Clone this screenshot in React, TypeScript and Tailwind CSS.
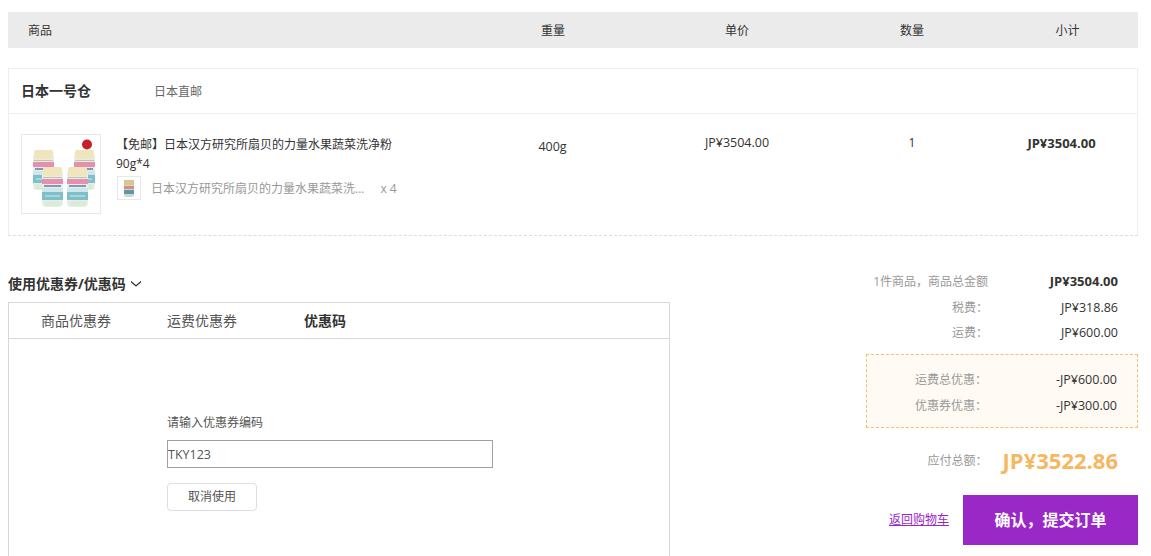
const FONT = "font-['Open_Sans','Noto_Sans_CJK_SC',sans-serif]";

// one bottle of the product shot, 21x40 in image units
function Bottle({ x, y }: { x: number; y: number }) {
  return (
    <g transform={`translate(${x} ${y})`}>
      <rect x="0" y="3" width="21" height="37" rx="4" fill="#e6eeea" />
      <rect x="1" y="0" width="19" height="9" rx="2" fill="#efe6bd" />
      <rect x="1" y="10" width="19" height="1" fill="#b9c7a8" />
      <rect x="0" y="12" width="21" height="5" fill="#e88fb0" />
      <rect x="2" y="18" width="17" height="2" fill="#8796b4" />
      <rect x="0" y="21" width="21" height="4" fill="#cfe6ea" />
      <rect x="0" y="25" width="21" height="8" fill="#7fbfcc" />
      <rect x="3" y="28" width="15" height="2" fill="#a8d8d4" />
      <rect x="2" y="34" width="17" height="5" rx="2" fill="#dcebd6" />
    </g>
  );
}

function ProductImage() {
  return (
    <svg viewBox="0 0 78 78" className="h-full w-full">
      <rect width="78" height="78" fill="#fff" />
      <Bottle x={11} y={15} />
      <Bottle x={52} y={15} />
      <Bottle x={20} y={32} />
      <Bottle x={45} y={32} />
      <circle cx="65" cy="9.5" r="5" fill="#c8202a" />
    </svg>
  );
}

function BundleThumb() {
  return (
    <svg viewBox="0 0 22 22" className="h-full w-full">
      <rect width="22" height="22" fill="#fff" />
      <rect x="6" y="3" width="10" height="17" rx="2" fill="#cfd8cc" />
      <rect x="6" y="3" width="10" height="5" fill="#d9c88e" />
      <rect x="6" y="9" width="10" height="3" fill="#d98a8a" />
      <rect x="6" y="13" width="10" height="4" fill="#5a9aa8" />
    </svg>
  );
}

function SummaryRow({
  label,
  value,
  bold,
  className,
}: {
  label: string;
  value: string;
  bold?: boolean;
  className: string;
}) {
  return (
    <div className={`flex items-center justify-end text-xs ${className}`}>
      <span className="text-[#999]">{label}</span>
      <span
        className={`w-[130px] text-right text-[#333] ${bold ? "text-[13px] font-bold" : "text-[12.5px]"}`}
      >
        {value}
      </span>
    </div>
  );
}

export default function App() {
  return (
    <div
      className={`${FONT} h-[556px] w-[1151px] overflow-hidden bg-white pl-2 pt-3 text-xs text-[#333]`}
    >
      {/* Table head */}
      <div className="grid h-9 w-[1130px] grid-cols-[457px_176px_192px_158px_147px] items-center bg-[#ebebeb] pt-[2px] text-center">
        <span className="pl-5 text-left">商品</span>
        <span>重量</span>
        <span>单价</span>
        <span>数量</span>
        <span className="pl-[6px]">小计</span>
      </div>

      {/* Warehouse card */}
      <div className="mt-5 h-[168px] w-[1130px] border border-[#eee] border-b-[#ddd] [border-bottom-style:dashed]">
        <div className="flex h-[45px] items-center border-b border-[#eee] pl-3">
          <span className="w-[133px] text-sm font-bold">日本一号仓</span>
          <span className="pt-[2px] text-[#666]">日本直邮</span>
        </div>
        <div className="grid grid-cols-[456px_176px_192px_158px_146px] pt-5 text-center">
          <div className="flex pl-3 text-left">
            <div className="h-20 w-20 shrink-0 border border-[#e8e8e8]">
              <ProductImage />
            </div>
            <div className="ml-[15px] w-[300px]">
              <p className="leading-5">
                <span className="relative top-[1px]">【免邮】日本汉方研究所扇贝的力量水果蔬菜洗净粉</span>
                <br />
                90g*4
              </p>
              <div className="mt-[2px] flex items-center pl-[1px]">
                <div className="h-6 w-6 shrink-0 border border-[#e8e8e8]">
                  <BundleThumb />
                </div>
                <span className="ml-[10px] pt-[2px] text-[#999]">日本汉方研究所扇贝的力量水果蔬菜洗...</span>
                <span className="ml-[16px] pt-[2px] text-[#999]">x 4</span>
              </div>
            </div>
          </div>
          <span className="pr-[1px] pt-[5px] text-[12.5px]">400g</span>
          <span className="pt-[1px] text-[12.5px]">JP¥3504.00</span>
          <span className="pt-[1px]">1</span>
          <span className="pr-[5px] pt-[1px] text-[13px] font-bold">JP¥3504.00</span>
        </div>
      </div>

      <div className="mt-[32px] flex w-[1130px] items-start justify-between">
        {/* Coupons */}
        <div className="w-[662px]">
          <div className="flex h-[34px] items-center pb-[2px] text-sm font-bold">
            使用优惠券/优惠码
            <svg viewBox="0 0 12 8" className="ml-[4px] h-[8px] w-3 text-[#333]">
              <path d="M1 1.5 6 6l5-4.5" fill="none" stroke="currentColor" strokeWidth="1.3" />
            </svg>
          </div>
          <div className="h-[300px] border border-[#d9d9d9]">
            <div className="flex h-9 items-center border-b border-[#d9d9d9] pt-[1px] text-sm">
              <span className="ml-8 w-[126px] text-[#555]">商品优惠券</span>
              <span className="w-[137px] text-[#555]">运费优惠券</span>
              <span className="font-bold">优惠码</span>
            </div>
            <div className="pl-[158px] pt-[76px]">
              <div className="leading-4 text-[#555]">请输入优惠券编码</div>
              <input
                readOnly
                value="TKY123"
                className="mt-[9px] block h-7 w-[326px] border border-[#a0a0a0] text-[12.5px] text-[#555] outline-none"
              />
              <button className="mt-[15px] block h-7 w-[90px] rounded-sm border border-[#ddd] bg-white text-xs text-[#555]">
                取消使用
              </button>
            </div>
          </div>
        </div>

        {/* Totals */}
        <div className="mt-[2px] w-[272px]">
          <SummaryRow label="1件商品，商品总金额" value="JP¥3504.00" bold className="h-6 pr-5" />
          <SummaryRow label="税费：" value="JP¥318.86" className="mt-[2px] h-6 pr-5" />
          <SummaryRow label="运费：" value="JP¥600.00" className="mt-[1px] h-6 pr-5" />
          <div className="mt-[9px] h-[74px] border border-dashed border-[#f0c078] bg-[#fffaf3] pt-[12px]">
            <SummaryRow label="运费总优惠：" value="-JP¥600.00" className="h-[26px] pr-5" />
            <SummaryRow label="优惠券优惠：" value="-JP¥300.00" className="h-[26px] pr-5" />
          </div>
          <div className="mt-[19px] flex h-7 items-center justify-end pr-5">
            <span className="text-[#999]">应付总额：</span>
            <span className="ml-[15px] text-[22px] font-bold text-[#f5b75f]">JP¥3522.86</span>
          </div>
          <div className="mt-[20px] flex items-center justify-end">
            <a className="mr-[14px] text-xs text-[#9a28c6] underline">返回购物车</a>
            <button className="h-[50px] w-[175px] bg-[#9a28c6] text-base font-bold text-white">
              确认，提交订单
            </button>
          </div>
        </div>
      </div>
    </div>
  );
}
